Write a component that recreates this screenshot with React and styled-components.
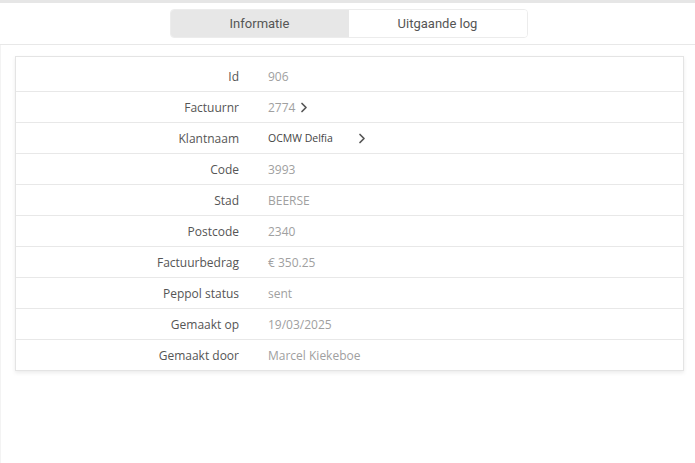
import styled, { createGlobalStyle } from 'styled-components';

const GlobalStyle = createGlobalStyle`
  body {
    margin: 0;
    background: #ffffff;
    font-family: "Open Sans", "Noto Sans", sans-serif;
  }
`;

const Page = styled.div`
  min-height: 463px;
  display: flex;
  flex-direction: column;
  border-top: 3px solid #e6e6e6;
`;

const TabBar = styled.div`
  display: flex;
  justify-content: center;
  padding: 6px 0 6px 2px;
  border-bottom: 1px solid #e8e8e8;
`;

const TabGroup = styled.div`
  display: flex;
  width: 358px;
  height: 29px;
  box-sizing: border-box;
  border: 1px solid #ececec;
  border-radius: 4px;
  overflow: hidden;
`;

const Tab = styled.div`
  flex: 1;
  display: flex;
  align-items: center;
  justify-content: center;
  font-family: Roboto, "Liberation Sans", sans-serif;
  font-size: 13px;
  color: #555;
  background: ${(p) => (p.$active ? '#e7e7e7' : '#ffffff')};
`;

const Content = styled.div`
  flex: 1;
  padding: 11px 11px 0 14px;
  border-left: 1px solid #f3f3f3;
`;

const Card = styled.div`
  border: 1px solid #e4e4e4;
  box-shadow: 0 2px 4px rgba(0, 0, 0, 0.08);
  padding-top: 4px;
  background: #fff;
`;

const Row = styled.div`
  display: grid;
  grid-template-columns: 223px 1fr;
  column-gap: 29px;
  align-items: center;
  height: 31px;
  box-sizing: border-box;
  border-bottom: 1px solid #e8e8e8;
  &:last-child {
    border-bottom: none;
    height: 30px;
  }
`;

const Label = styled.div`
  text-align: right;
  font-size: 12px;
  color: #555;
`;

const Value = styled.div`
  display: flex;
  align-items: center;
  font-size: ${(p) => (p.$small ? '10.5px' : '12px')};
  color: ${(p) => (p.$small ? '#444' : '#a0a0a0')};
`;

const Chevron = styled.span`
  display: inline-flex;
  margin-left: ${(p) => p.$gap || 6}px;
  color: #555;
`;

const ChevronIcon = () => (
  <svg width="8" height="11" viewBox="0 0 8 11">
    <path d="M2 1.5 L6 5.5 L2 9.5" fill="none" stroke="currentColor" strokeWidth="1.7" strokeLinecap="round" strokeLinejoin="round" />
  </svg>
);

const rows = [
  { label: 'Id', value: '906' },
  { label: 'Factuurnr', value: '2774', link: 5 },
  { label: 'Klantnaam', value: 'OCMW Delfia', small: true, link: 25 },
  { label: 'Code', value: '3993' },
  { label: 'Stad', value: 'BEERSE' },
  { label: 'Postcode', value: '2340' },
  { label: 'Factuurbedrag', value: '€ 350.25' },
  { label: 'Peppol status', value: 'sent' },
  { label: 'Gemaakt op', value: '19/03/2025' },
  { label: 'Gemaakt door', value: 'Marcel Kiekeboe' },
];

const App = () => (
  <>
    <GlobalStyle />
    <Page>
      <TabBar>
        <TabGroup>
          <Tab $active>Informatie</Tab>
          <Tab>Uitgaande log</Tab>
        </TabGroup>
      </TabBar>
      <Content>
        <Card>
          {rows.map((r) => (
            <Row key={r.label}>
              <Label>{r.label}</Label>
              <Value $small={r.small}>
                {r.value}
                {r.link && (
                  <Chevron $gap={r.link}>
                    <ChevronIcon />
                  </Chevron>
                )}
              </Value>
            </Row>
          ))}
        </Card>
      </Content>
    </Page>
  </>
);

export default App;
